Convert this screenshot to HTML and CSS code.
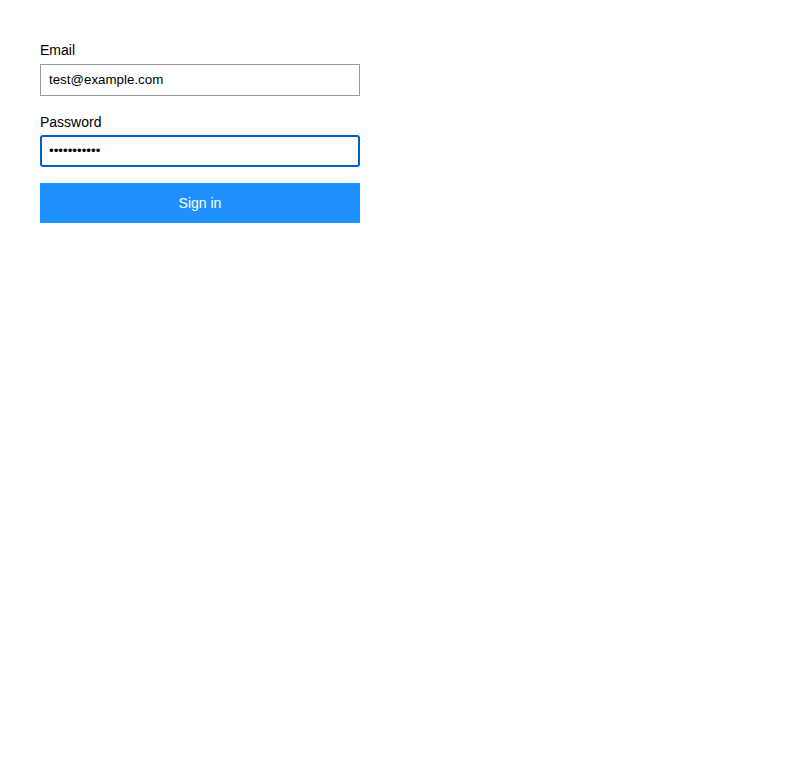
FILE: index.html
```html
<!DOCTYPE html>
<html lang="en">
<head>
<meta charset="utf-8">
<title>Sign in</title>
<link rel="stylesheet" href="styles.css">
</head>
<body>
<form class="login">
  <div class="field">
    <label class="label" for="email">Email</label>
    <input class="input" id="email" type="email" value="test@example.com">
  </div>
  <div class="field">
    <label class="label" for="password">Password</label>
    <input class="input input-focused" id="password" type="password" value="secretpass1">
  </div>
  <button class="button" type="button">Sign in</button>
</form>
</body>
</html>
```
FILE: styles.css
```css
html, body {
  margin: 0;
  padding: 0;
  background: #ffffff;
}
body {
  font-family: "Liberation Sans", Arial, sans-serif;
  color: #000;
}
.login {
  width: 320px;
  padding: 42px 40px;
  display: flex;
  flex-direction: column;
}
.field {
  display: flex;
  flex-direction: column;
  margin-bottom: 18px;
}
.label {
  font-size: 14px;
  line-height: 17px;
  margin-bottom: 5px;
}
.input {
  box-sizing: border-box;
  width: 320px;
  height: 32px;
  border: 1px solid #999999;
  border-radius: 0;
  padding: 0 8px 1px;
  font-family: "Liberation Sans", Arial, sans-serif;
  font-size: 13.33px;
  color: #000;
  background: #fff;
  outline: none;
  margin: 0;
}
.input-focused {
  border: 2px solid #005fcc;
  border-radius: 3px;
  padding: 0 7px 1px;
  margin-top: -1px;
  height: 32px;
}
.button {
  box-sizing: border-box;
  width: 320px;
  height: 40px;
  border: none;
  border-radius: 0;
  background: #1e90ff;
  color: #fff;
  font-family: "Liberation Sans", Arial, sans-serif;
  font-size: 14px;
  margin-top: -2px;
  padding: 0;
}
```
